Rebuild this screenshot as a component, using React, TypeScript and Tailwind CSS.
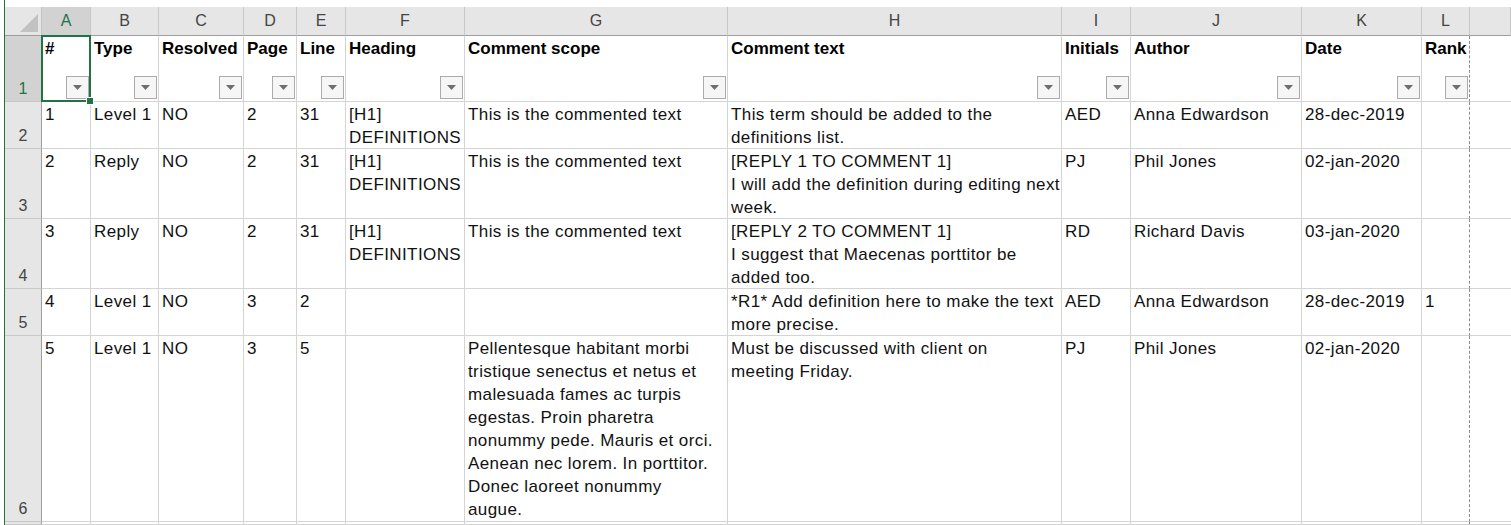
import React from 'react';

const FONT = { fontFamily: '"Liberation Sans", Arial, sans-serif' };

const letters = ['A', 'B', 'C', 'D', 'E', 'F', 'G', 'H', 'I', 'J', 'K', 'L', ''];
const headers = ['#', 'Type', 'Resolved', 'Page', 'Line', 'Heading', 'Comment scope', 'Comment text', 'Initials', 'Author', 'Date', 'Rank'];

type Row = { n: string; cells: string[][] };

const rows: Row[] = [
  {
    n: '2',
    cells: [['1'], ['Level 1'], ['NO'], ['2'], ['31'], ['[H1]', 'DEFINITIONS'], ['This is the commented text'], ['This term should be added to the', 'definitions list.'], ['AED'], ['Anna Edwardson'], ['28-dec-2019'], [], []],
  },
  {
    n: '3',
    cells: [['2'], ['Reply'], ['NO'], ['2'], ['31'], ['[H1]', 'DEFINITIONS'], ['This is the commented text'], ['[REPLY 1 TO COMMENT 1]', 'I will add the definition during editing next', 'week.'], ['PJ'], ['Phil Jones'], ['02-jan-2020'], [], []],
  },
  {
    n: '4',
    cells: [['3'], ['Reply'], ['NO'], ['2'], ['31'], ['[H1]', 'DEFINITIONS'], ['This is the commented text'], ['[REPLY 2 TO COMMENT 1]', 'I suggest that Maecenas porttitor be', 'added too.'], ['RD'], ['Richard Davis'], ['03-jan-2020'], [], []],
  },
  {
    n: '5',
    cells: [['4'], ['Level 1'], ['NO'], ['3'], ['2'], [], [], ['*R1* Add definition here to make the text', 'more precise.'], ['AED'], ['Anna Edwardson'], ['28-dec-2019'], ['1'], []],
  },
  {
    n: '6',
    cells: [
      ['5'], ['Level 1'], ['NO'], ['3'], ['5'], [],
      ['Pellentesque habitant morbi', 'tristique senectus et netus et', 'malesuada fames ac turpis', 'egestas. Proin pharetra', 'nonummy pede. Mauris et orci.', 'Aenean nec lorem. In porttitor.', 'Donec laoreet nonummy', 'augue.'],
      ['Must be discussed with client on', 'meeting Friday.'], ['PJ'], ['Phil Jones'], ['02-jan-2020'], [], [],
    ],
  },
  { n: '', cells: [[], [], [], [], [], [], [], [], [], [], [], [], []] },
];

function FilterButton() {
  return (
    <div className="self-end mr-[1px] mb-[2px] w-[23px] h-[23px] border border-[#ababab] bg-[#f6f6f6] flex items-center justify-center">
      <svg width="9" height="5" viewBox="0 0 9 5">
        <polygon points="0,0 9,0 4.5,5" fill="#6e6e6e" />
      </svg>
    </div>
  );
}

function borderFor(i: number) {
  if (i === 11) return 'border-r border-b border-[#d4d4d4] border-r-[#8c8c8c] [border-right-style:dashed]';
  return 'border-r border-b border-[#d4d4d4]';
}

export default function App() {
  return (
    <div className="flex w-[1511px] h-[525px] overflow-hidden bg-white text-black" style={FONT}>
      <div className="w-[4px] shrink-0 bg-white" />
      <div className="w-[1px] shrink-0 bg-[#217346]" />
      <div className="flex-1 flex flex-col pt-[7px]">
        <div className="grid grid-cols-[37px_49px_68px_85px_53px_49px_119px_263px_334px_69px_171px_120px_48px_1fr] grid-rows-[29px_66px_47px_70px_70px_47px_186px_1fr] h-[518px] overflow-hidden">
          {/* corner */}
          <div className="bg-[#e6e6e6] border-r border-b border-r-[#c4c4c4] border-b-[#9e9e9e] flex">
            <svg width="36" height="28" viewBox="0 0 36 28">
              <polygon points="33,7 33,25 15,25" fill="#c2c2c2" />
            </svg>
          </div>
          {/* column letters */}
          {letters.map((l, i) => (
            <div
              key={'c' + i}
              className={
                'flex items-center justify-center text-[16px] border-r border-b border-r-[#c8c8c8] border-b-[#9e9e9e] ' +
                (i === 0 ? 'bg-[#d2d2d2] text-[#217346]' : 'bg-[#e6e6e6] text-[#444444]')
              }
            >
              {l}
            </div>
          ))}

          {/* row 1 */}
          <div className="bg-[#d2d2d2] text-[#217346] text-[16px] leading-[23px] flex items-end justify-center pb-[1px] border-r border-b border-r-[#217346] border-b-[#c8c8c8]">
            1
          </div>
          {headers.map((h, i) => (
            <div key={'h' + i} className={'relative flex flex-col justify-between ' + borderFor(i)}>
              <div className="pl-[3px] pt-[1px] font-bold text-[17px] leading-[23px] whitespace-nowrap">{h}</div>
              <FilterButton />
              {i === 0 && (
                <div className="absolute z-10 left-[-1px] top-[-1px] right-[-1px] bottom-[-1px] border-2 border-[#217346]">
                  <div className="absolute right-[-5px] bottom-[-5px] w-[8px] h-[8px] bg-[#217346] border border-white" />
                </div>
              )}
            </div>
          ))}
          <div className="border-b border-[#d4d4d4]" />

          {/* data rows */}
          {rows.map((r, ri) => (
            <React.Fragment key={'r' + ri}>
              <div className="bg-[#e6e6e6] text-[#444444] text-[16px] leading-[23px] flex items-end justify-center pb-[1px] border-r border-b border-r-[#9e9e9e] border-b-[#c8c8c8]">
                {r.n}
              </div>
              {r.cells.map((c, i) => (
                <div
                  key={ri + '-' + i}
                  className={'overflow-hidden pl-[3px] pt-[1px] text-[17px] leading-[23px] tracking-[0.4px] text-[#111111] ' + (i === 12 ? 'border-b border-[#d4d4d4]' : borderFor(i))}
                >
                  {c.map((line, j) => (
                    <div key={j} className="whitespace-nowrap">
                      {line}
                    </div>
                  ))}
                </div>
              ))}
            </React.Fragment>
          ))}
        </div>
      </div>
    </div>
  );
}
